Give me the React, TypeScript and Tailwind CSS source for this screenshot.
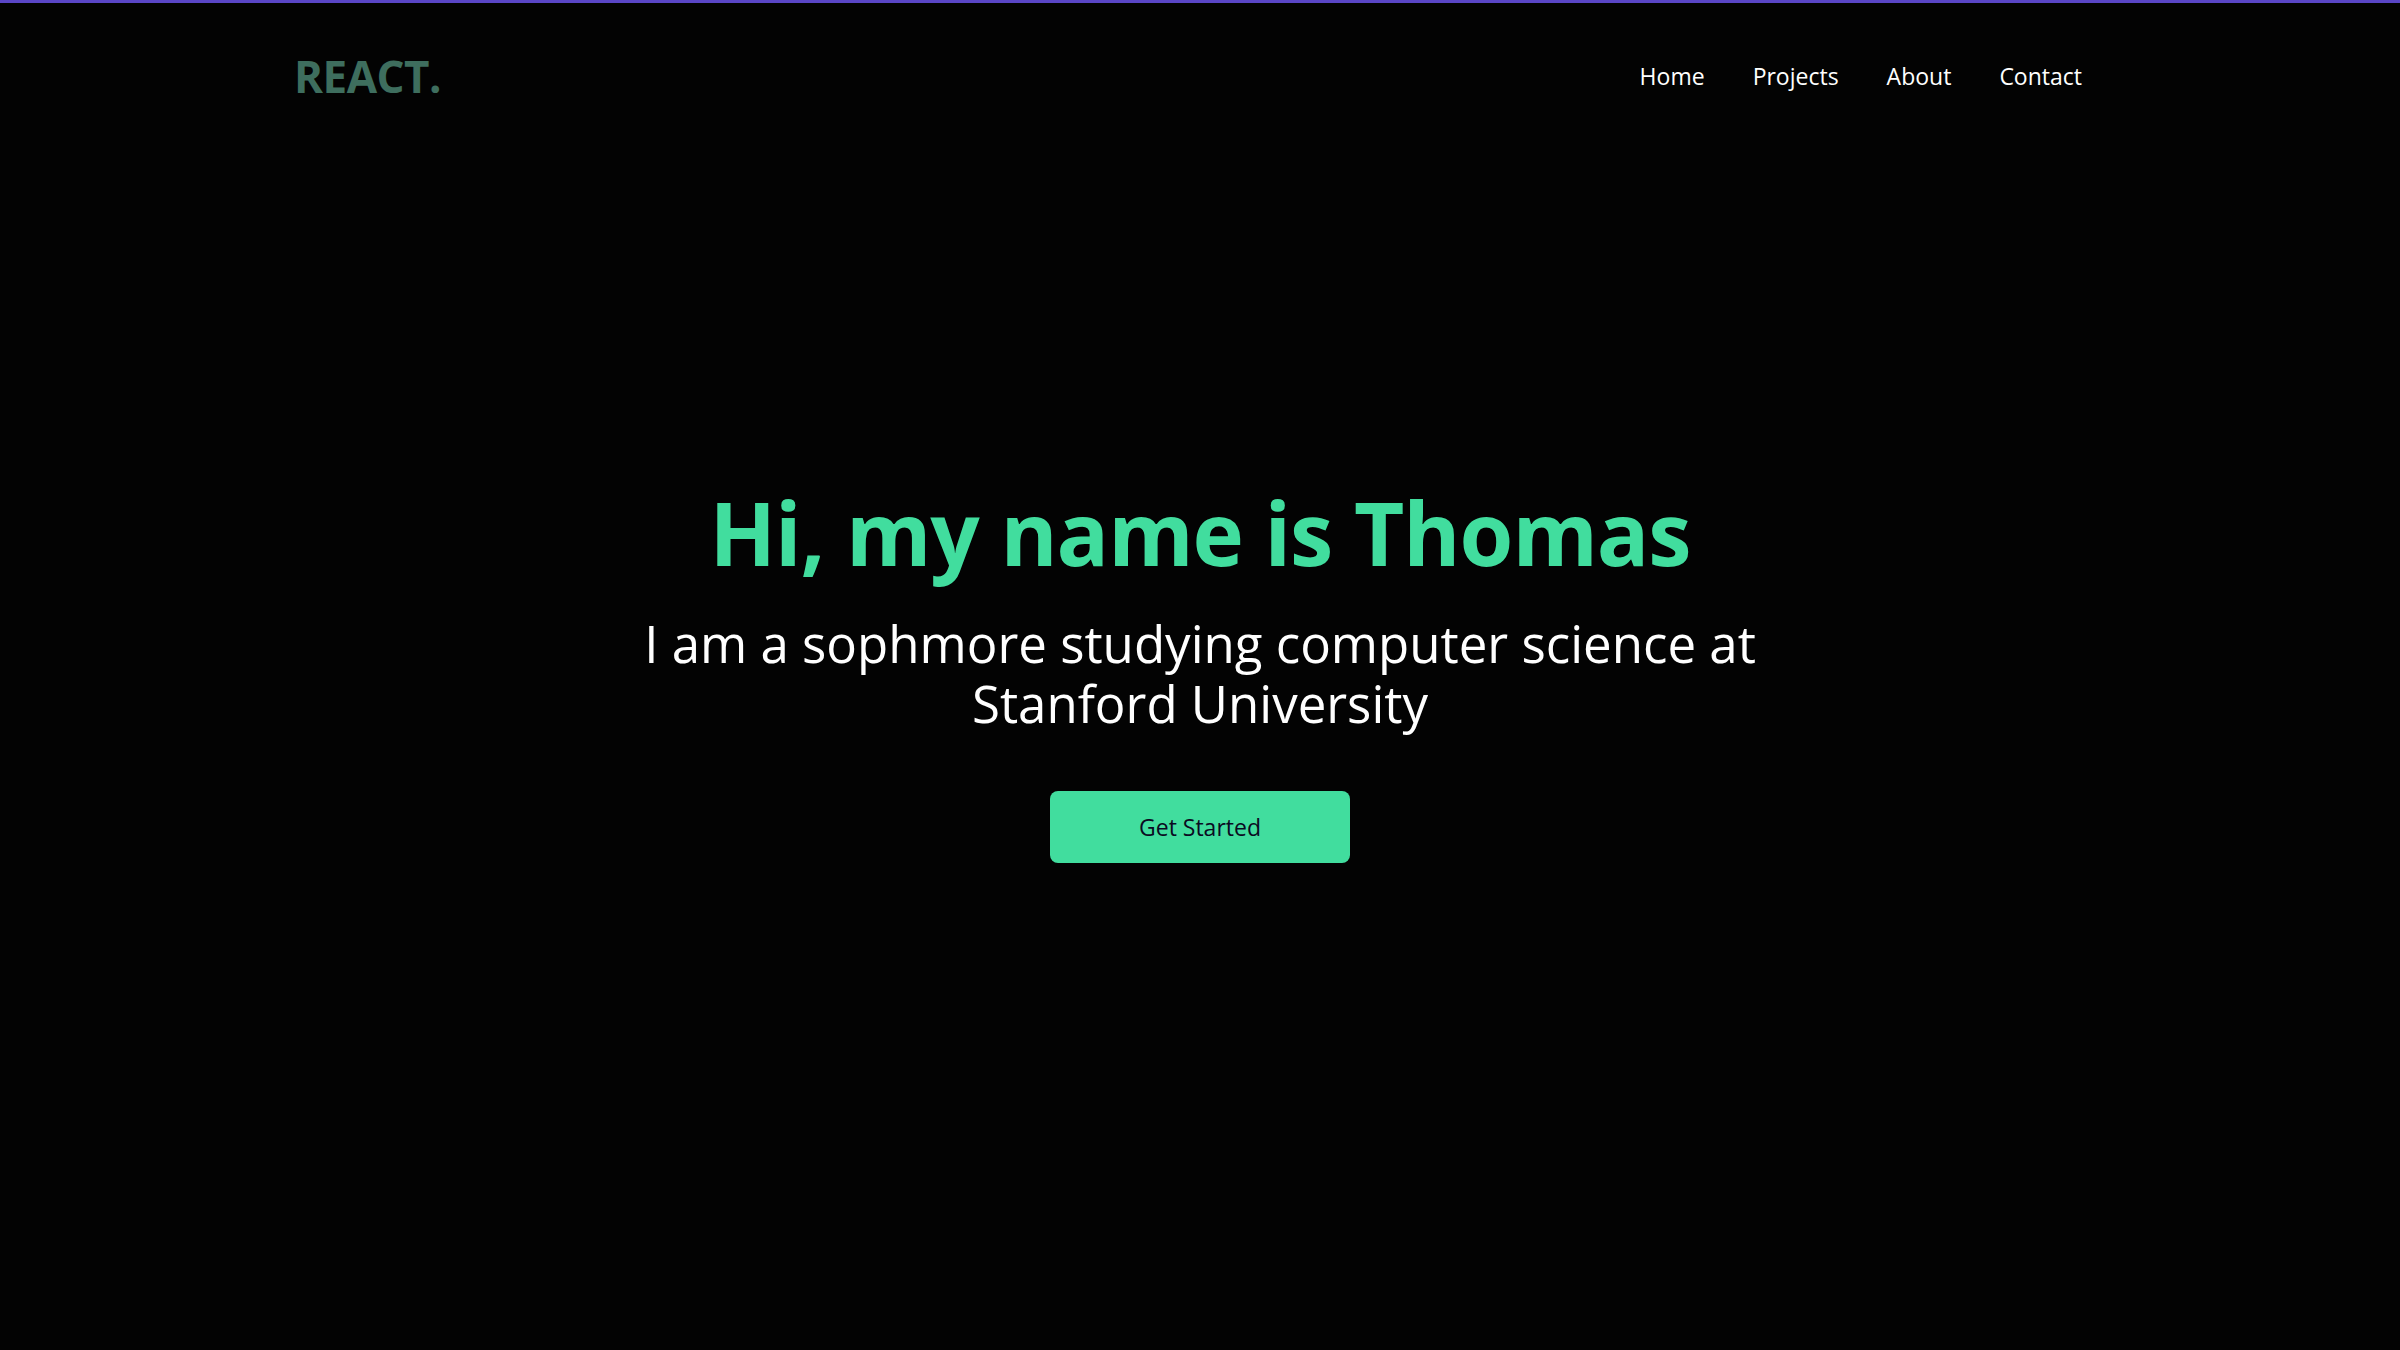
const links = ["Home", "Projects", "About", "Contact"];

const App = () => {
  return (
    <div className="h-screen flex flex-col bg-[#030303] border-t-[3px] border-[#5a46c6] font-['Segoe_UI','Open_Sans',sans-serif]">
      <header className="h-[150px] flex items-center justify-between pl-[294px] pr-[318px] pb-[4px]">
        <div className="text-[44px] font-bold tracking-[-0.5px] text-[#3e6e5e]">REACT.</div>
        <nav className="flex items-center gap-[48px]">
          {links.map((l) => (
            <a key={l} href="#" className="text-[23px] text-white">
              {l}
            </a>
          ))}
        </nav>
      </header>

      <main className="flex-1 flex flex-col items-center justify-center pb-[160px] text-center">
        <h1 className="text-[87px] leading-[104px] font-bold text-[#41dd9e] tracking-[-1px]">
          Hi, my name is Thomas
        </h1>
        <p className="mt-[29px] text-[51px] leading-[60px] text-white">
          I am a sophmore studying computer science at
          <br />
          Stanford University
        </p>
        <button
          type="button"
          className="mt-[58px] w-[300px] h-[72px] rounded-[8px] bg-[#41dd9e] text-[23px] text-[#0b0b22]"
        >
          Get Started
        </button>
      </main>
    </div>
  );
};

export default App;
